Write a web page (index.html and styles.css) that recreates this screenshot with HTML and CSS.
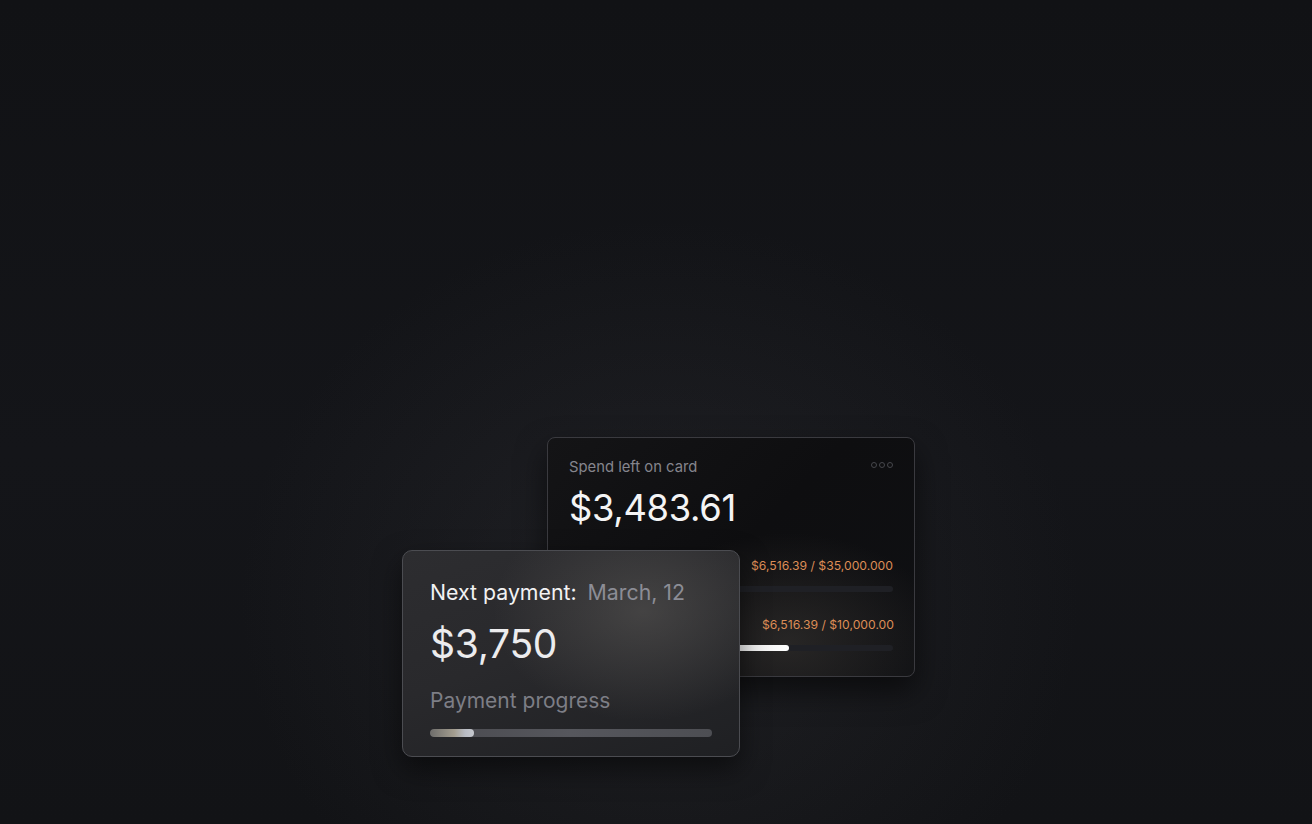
FILE: index.html
```html
<!DOCTYPE html>
<html>
<head>
<meta charset="utf-8">
<link rel="stylesheet" href="styles.css">
</head>
<body>
<main class="stage">
  <div class="stack">
    <section class="card-back">
      <div class="head">
        <span class="label">Spend left on card</span>
        <span class="dots"><i></i><i></i><i></i></span>
      </div>
      <div class="amount">$3,483.61</div>
      <div class="row row-first">
        <div class="row-label"><span class="hidden-name">Monthly limit</span><span class="val">$6,516.39 / $35,000.000</span></div>
        <div class="track"><div class="fill fill-dim" style="width:18%"></div></div>
      </div>
      <div class="row">
        <div class="row-label"><span class="hidden-name">Card limit</span><span class="val">$6,516.39 / $10,000.00</span></div>
        <div class="track"><div class="fill fill-bright" style="width:68%"></div></div>
      </div>
    </section>
    <section class="card-front">
      <div class="next"><span class="next-title">Next payment:</span><span class="next-date">March, 12</span></div>
      <div class="big">$3,750</div>
      <div class="prog-label">Payment progress</div>
      <div class="ptrack"><div class="pfill" style="width:15.6%"></div></div>
    </section>
  </div>
</main>
</body>
</html>
```
FILE: styles.css
```css
html, body {
  margin: 0;
  height: 100%;
}
body {
  font-family: Inter, "Noto Sans", sans-serif;
  background:
    radial-gradient(ellipse 420px 380px at 660px 600px, rgba(60,60,64,0.3), rgba(30,30,34,0) 100%),
    linear-gradient(180deg, #111215 0%, #141519 55%, #121316 100%);
  color: #fff;
  overflow: hidden;
}
.stage {
  padding: 437px 0 0 547px;
}
.stack {
  position: relative;
  width: 368px;
}
.card-back {
  box-sizing: border-box;
  width: 368px;
  height: 240px;
  border: 1px solid #3a3a3f;
  border-radius: 8px;
  padding: 20px 21px 0 21px;
  background:
    radial-gradient(ellipse 160px 110px at 240px 205px, rgba(70,66,62,0.45), rgba(20,20,22,0) 100%),
    linear-gradient(135deg, #141416 0%, #0e0e10 50%, #0f1013 100%);
  box-shadow: 0 14px 30px rgba(0,0,0,0.55);
}
.head {
  display: flex;
  justify-content: space-between;
  align-items: center;
  height: 17px;
}
.label {
  font-size: 14.8px;
  color: #85858d;
}
.dots {
  display: flex;
  gap: 2px;
  margin-top: -4px;
}
.dots i {
  display: block;
  width: 4px;
  height: 4px;
  border: 1px solid #46474c;
  border-radius: 50%;
}
.amount {
  margin-top: 10px;
  font-size: 36.3px;
  line-height: 46px;
  font-weight: 400;
  letter-spacing: -0.3px;
  color: #f4f4f5;
}
.row {
  margin-top: 25px;
}
.row-first {
  margin-top: 27px;
}
.row-label {
  display: flex;
  justify-content: space-between;
  font-size: 12.2px;
  line-height: 16px;
}
.row:not(.row-first) .row-label {
  margin-right: -1px;
}
.hidden-name {
  color: #8a8a92;
}
.val {
  color: #dc8d56;
}
.track {
  margin-top: 12px;
  height: 6px;
  border-radius: 3px;
  background: #1f2025;
  overflow: hidden;
}
.fill {
  height: 100%;
  border-radius: 3px;
}
.fill-dim {
  background: #2a2b30;
}
.fill-bright {
  background: linear-gradient(90deg, #bdbdbd, #f5f5f5 90%, #ffffff);
}
.card-front {
  position: absolute;
  left: -145px;
  top: 113px;
  box-sizing: border-box;
  width: 338px;
  height: 207px;
  border: 1.5px solid #4b4c51;
  border-radius: 10px;
  padding: 27px 27px 0 27px;
  background:
    radial-gradient(ellipse 150px 110px at 240px 60px, rgba(90,88,86,0.55), rgba(50,50,52,0) 100%),
    linear-gradient(160deg, #2d2d30 0%, #29292c 45%, #1f2023 100%);
  box-shadow: 0 12px 28px rgba(0,0,0,0.5);
}
.next {
  display: flex;
  align-items: baseline;
  gap: 11px;
  font-size: 21.3px;
  line-height: 28px;
}
.next-title {
  color: #f2f2f3;
}
.next-date {
  color: #8c8d96;
}
.big {
  margin-top: 14px;
  font-size: 39px;
  line-height: 48px;
  color: #ececee;
  letter-spacing: -0.3px;
}
.prog-label {
  margin-top: 20px;
  font-size: 21px;
  line-height: 26px;
  color: #7d7e86;
}
.ptrack {
  margin-top: 15px;
  height: 8px;
  border-radius: 4px;
  background: linear-gradient(90deg, #4a4a4f, #56575d 50%, #4d4e53);
  overflow: hidden;
}
.pfill {
  height: 100%;
  border-radius: 4px;
  background: linear-gradient(90deg, #6e6d6b, #a39d8f 55%, #b9bcc4 80%, #c6c8ce);
}
```
